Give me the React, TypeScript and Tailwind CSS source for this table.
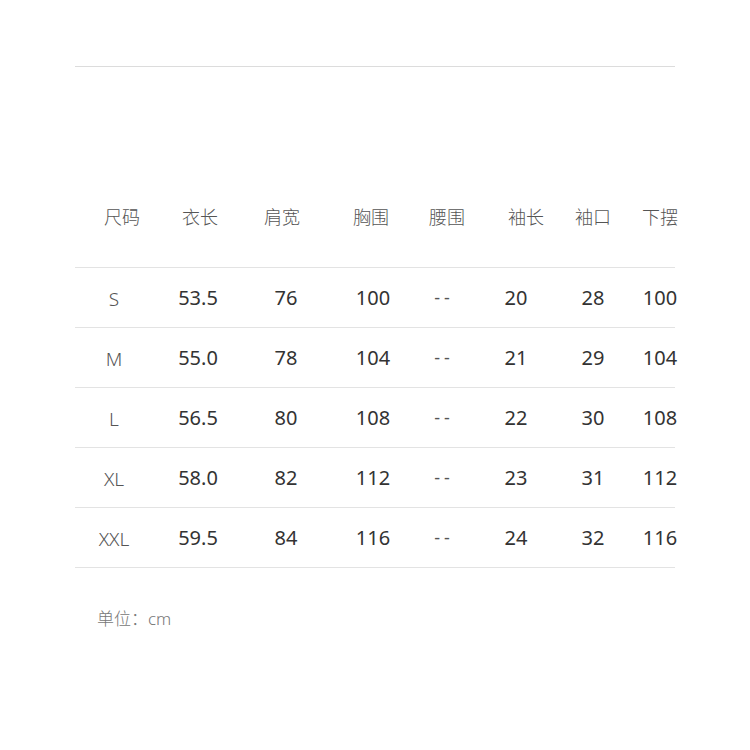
const headers = [
  { label: "尺码", w: "w-[94px]" },
  { label: "衣长", w: "w-[62px]" },
  { label: "肩宽", w: "w-[102px]" },
  { label: "胸围", w: "w-[76px]" },
  { label: "腰围", w: "w-[76px]" },
  { label: "袖长", w: "w-[82px]" },
  { label: "袖口", w: "w-[52px]" },
  { label: "下摆", w: "w-[82px]" },
];

const colWidths = [
  "w-[78px]",
  "w-[90px]",
  "w-[86px]",
  "w-[88px]",
  "w-[50px]",
  "w-[98px]",
  "w-[56px]",
  "w-[78px]",
];

const rows = [
  ["S", "53.5", "76", "100", "--", "20", "28", "100"],
  ["M", "55.0", "78", "104", "--", "21", "29", "104"],
  ["L", "56.5", "80", "108", "--", "22", "30", "108"],
  ["XL", "58.0", "82", "112", "--", "23", "31", "112"],
  ["XXL", "59.5", "84", "116", "--", "24", "32", "116"],
];

const font = { fontFamily: '"Noto Sans", "Noto Sans CJK SC", sans-serif' };

export default function App() {
  return (
    <div className="w-[750px] h-[750px] bg-white pt-[66px] px-[75px]" style={font}>
      <div className="w-[600px] border-t border-[#dcdcdc]" />

      {/* Header */}
      <div className="flex mt-[130px] h-[40px] items-center mb-[30px] text-[18px] font-light text-[#555]">
        {headers.map((h) => (
          <div key={h.label} className={`${h.w} shrink-0 text-center`}>
            {h.label}
          </div>
        ))}
      </div>

      {/* Rows */}
      <div className="w-[600px] border-b border-[#e3e3e3]">
        {rows.map((r, i) => (
          <div key={i} className="flex h-[60px] items-center border-t border-[#e3e3e3]">
            {r.map((cell, j) => (
              <div
                key={j}
                className={`${colWidths[j]} shrink-0 text-center whitespace-nowrap ${
                  j === 0
                    ? "text-[19px] font-light text-[#555] pt-[3px]"
                    : j === 4
                    ? "text-[18px] text-[#555] tracking-[4px] pl-[4px]"
                    : "text-[20px] text-[#333]"
                }`}
              >
                {cell}
              </div>
            ))}
          </div>
        ))}
      </div>

      <div className="mt-[38px] ml-[22px] text-[17px] font-light text-[#777]">单位：cm</div>
    </div>
  );
}
